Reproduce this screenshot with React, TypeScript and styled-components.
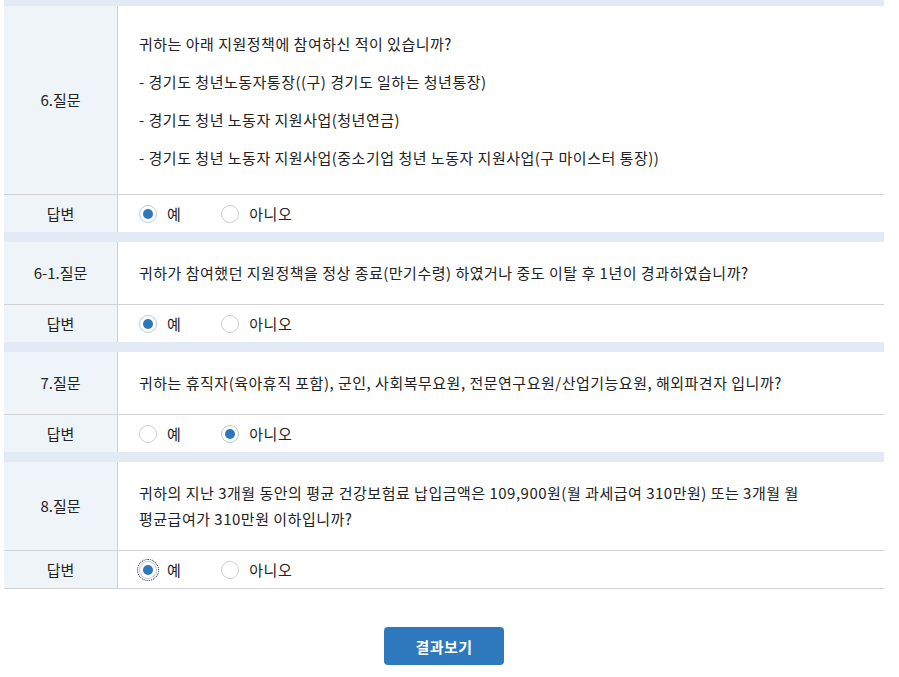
import * as React from 'react'
import styled, {createGlobalStyle} from 'styled-components'

const GlobalStyle = createGlobalStyle`
  html, body {
    margin: 0;
    padding: 0;
    background: #fff;
  }
  body {
    font-family: "Noto Sans CJK KR", "Noto Sans", sans-serif;
    color: #222;
    overflow: hidden;
  }
`

const Page = styled.div`
  width: 880px;
  padding: 0 4px;
  margin-top: -4px;
`

const Table = styled.div`
  display: flex;
  flex-direction: column;
  border-bottom: 1px solid #d2d2d2;
`

const Band = styled.div`
  height: 10px;
  background: #e1eaf5;
`

const Row = styled.div<{$answer?: boolean}>`
  display: grid;
  grid-template-columns: 114px 1fr;
  border-bottom: ${(p) => (p.$answer ? 'none' : '1px solid #d2d2d2')};
  font-size: 15px;
  line-height: 26px;
`

const Head = styled.div`
  display: flex;
  align-items: center;
  justify-content: center;
  background: #eff4f9;
  border-right: 1px solid #d2d2d2;
`

const Body = styled.div<{$tall?: boolean}>`
  display: flex;
  flex-direction: column;
  gap: 12px;
  padding: ${(p) => (p.$tall ? '25px 20px 23px 21px' : '18px 20px 18px 21px')};
  letter-spacing: 0.5px;
  word-break: keep-all;
`

const Line = styled.p`
  margin: 0;
`

const Options = styled.div`
  display: flex;
  align-items: center;
  gap: 40px;
  height: 37px;
  padding-left: 21px;
`

const Option = styled.label`
  display: flex;
  align-items: center;
  gap: 10px;
  letter-spacing: 0.5px;
  cursor: pointer;
`

const Circle = styled.span<{$on: boolean; $focused?: boolean}>`
  position: relative;
  box-sizing: border-box;
  width: 18px;
  height: 18px;
  border-radius: 50%;
  border: 1px solid ${(p) => (p.$on ? '#b9c9da' : '#cfcfcf')};
  background: #fff;
  outline: ${(p) => (p.$focused ? '1px dotted #222' : 'none')};
  outline-offset: 1px;
  &::after {
    content: '';
    display: ${(p) => (p.$on ? 'block' : 'none')};
    position: absolute;
    left: 3px;
    top: 3px;
    width: 10px;
    height: 10px;
    border-radius: 50%;
    background: #2e76bd;
  }
`

const Footer = styled.div`
  display: flex;
  justify-content: center;
  padding-top: 38px;
`

const Button = styled.button`
  width: 120px;
  height: 38px;
  border: none;
  border-radius: 4px;
  background: #2e78be;
  color: #fff;
  font-family: inherit;
  font-size: 15px;
  font-weight: 700;
  letter-spacing: 0.5px;
  cursor: pointer;
`

type TQuestion = {
  no: string
  lines: string[]
  answer: 'yes' | 'no'
  focused?: boolean
}

const questions: TQuestion[] = [
  {
    no: '6.질문',
    lines: [
      '귀하는 아래 지원정책에 참여하신 적이 있습니까?',
      '- 경기도 청년노동자통장((구) 경기도 일하는 청년통장)',
      '- 경기도 청년 노동자 지원사업(청년연금)',
      '- 경기도 청년 노동자 지원사업(중소기업 청년 노동자 지원사업(구 마이스터 통장))',
    ],
    answer: 'yes',
  },
  {
    no: '6-1.질문',
    lines: ['귀하가 참여했던 지원정책을 정상 종료(만기수령) 하였거나 중도 이탈 후 1년이 경과하였습니까?'],
    answer: 'yes',
  },
  {
    no: '7.질문',
    lines: ['귀하는 휴직자(육아휴직 포함), 군인, 사회복무요원, 전문연구요원/산업기능요원, 해외파견자 입니까?'],
    answer: 'no',
  },
  {
    no: '8.질문',
    lines: [
      '귀하의 지난 3개월 동안의 평균 건강보험료 납입금액은 109,900원(월 과세급여 310만원) 또는 3개월 월 평균급여가 310만원 이하입니까?',
    ],
    answer: 'yes',
    focused: true,
  },
]

const App: React.FC = () => {
  return (
    <Page>
      <GlobalStyle />
      <Table>
        {questions.map((q) => (
          <React.Fragment key={q.no}>
            <Band />
            <Row>
              <Head>{q.no}</Head>
              <Body $tall={q.lines.length > 1}>
                {q.lines.map((l) => (
                  <Line key={l}>{l}</Line>
                ))}
              </Body>
            </Row>
            <Row $answer>
              <Head>답변</Head>
              <Options>
                <Option>
                  <Circle $on={q.answer === 'yes'} $focused={q.focused} />
                  예
                </Option>
                <Option>
                  <Circle $on={q.answer === 'no'} />
                  아니오
                </Option>
              </Options>
            </Row>
          </React.Fragment>
        ))}
      </Table>
      <Footer>
        <Button>결과보기</Button>
      </Footer>
    </Page>
  )
}

export default App
